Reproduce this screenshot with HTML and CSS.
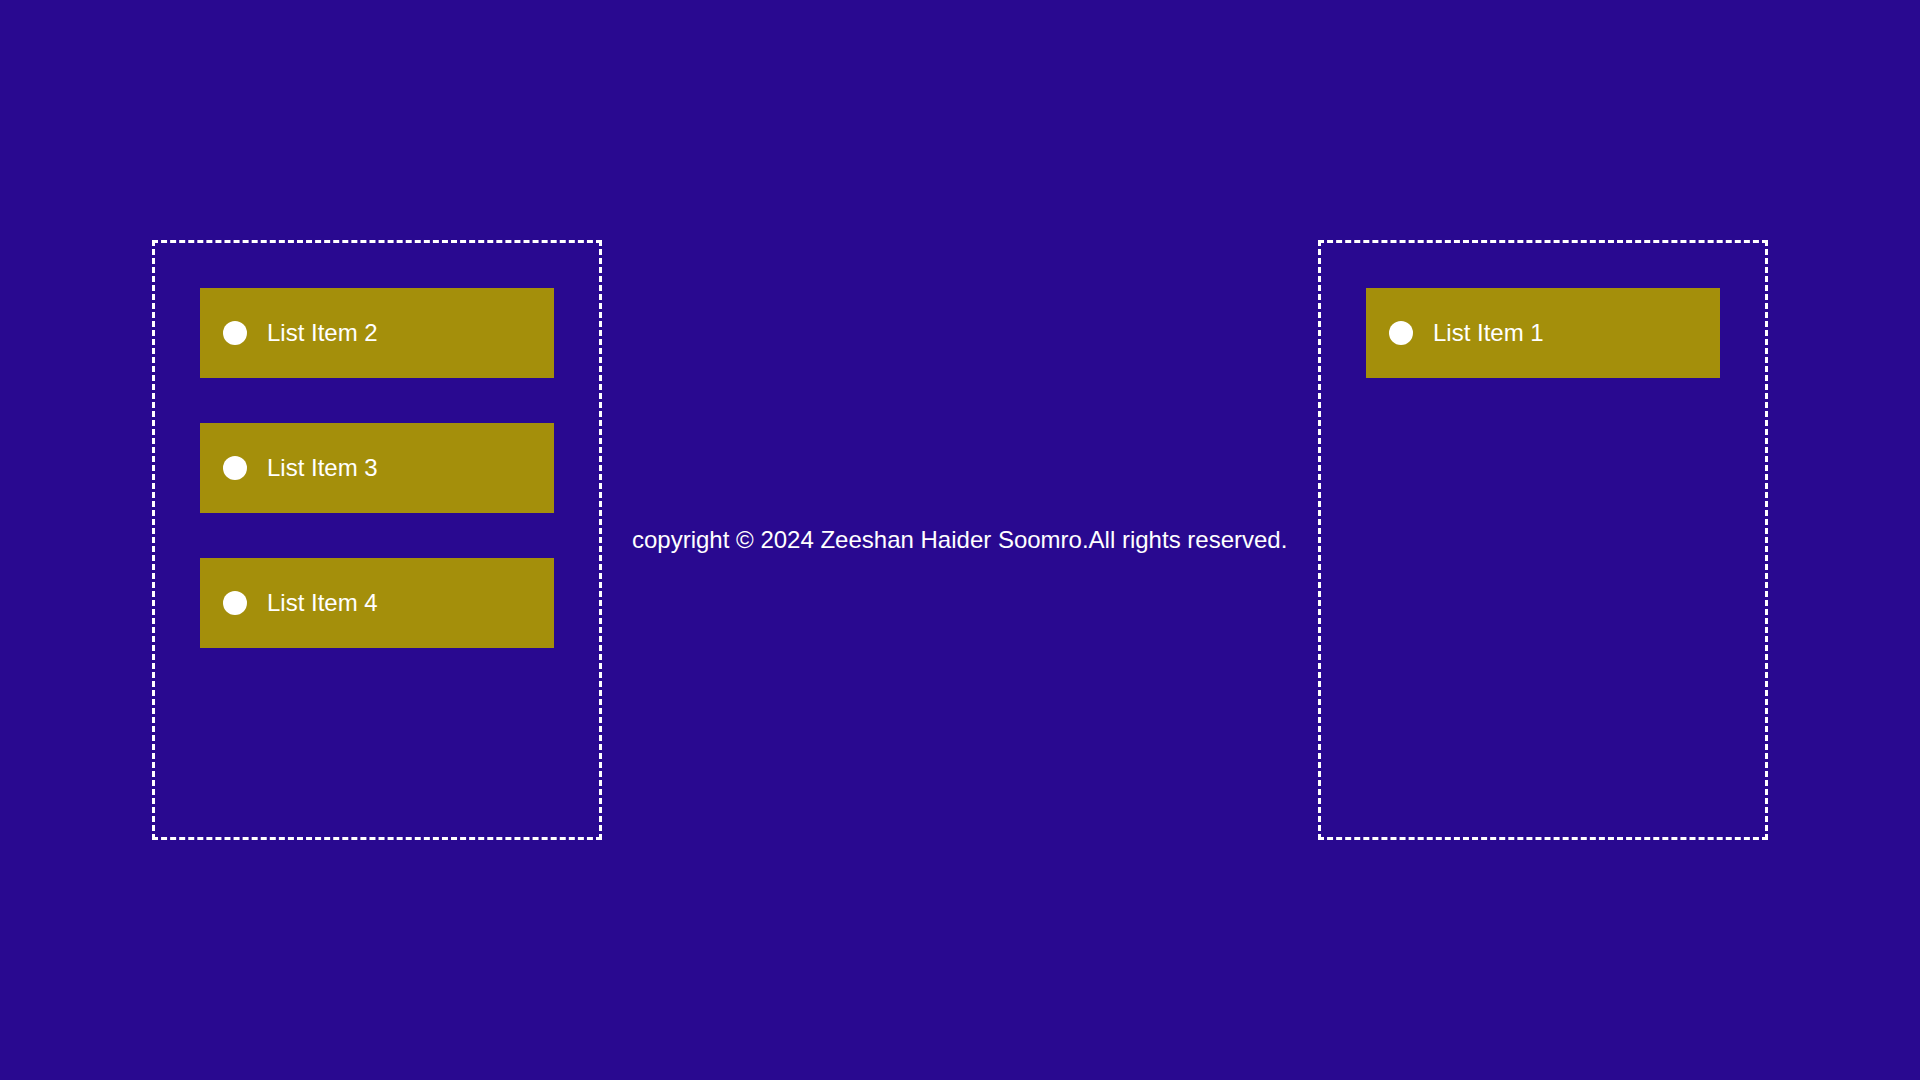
FILE: index.html
```html
<!DOCTYPE html>
<html>
<head>
<meta charset="utf-8">
<link rel="stylesheet" href="styles.css">
</head>
<body>
<main class="board">
  <section class="zone">
    <div class="item"><span class="dot"></span><span class="label">List Item 2</span></div>
    <div class="item"><span class="dot"></span><span class="label">List Item 3</span></div>
    <div class="item"><span class="dot"></span><span class="label">List Item 4</span></div>
  </section>
  <footer class="copy">copyright © 2024 Zeeshan Haider Soomro.All rights reserved.</footer>
  <section class="zone">
    <div class="item"><span class="dot"></span><span class="label">List Item 1</span></div>
  </section>
</main>
</body>
</html>
```
FILE: styles.css
```css
html, body {
  margin: 0;
  padding: 0;
}
body {
  background: #290990;
  height: 100vh;
  display: flex;
  align-items: center;
  font-family: "Liberation Sans", Arial, sans-serif;
  color: #ffffff;
}
.board {
  width: 100%;
  display: grid;
  grid-template-columns: 450px 1fr 450px;
  align-items: center;
  padding: 0 152px;
  box-sizing: border-box;
}
.zone {
  box-sizing: border-box;
  height: 600px;
  border: 3px dashed #ffffff;
  padding: 45px;
  display: flex;
  flex-direction: column;
  gap: 45px;
}
.item {
  height: 90px;
  background: #a48f0b;
  display: flex;
  align-items: center;
  padding-left: 23px;
  gap: 20px;
  font-size: 24px;
}
.dot {
  width: 24px;
  height: 24px;
  border-radius: 50%;
  background: #ffffff;
  flex: none;
}
.copy {
  font-size: 24px;
  padding-left: 30px;
  white-space: nowrap;
}
```
